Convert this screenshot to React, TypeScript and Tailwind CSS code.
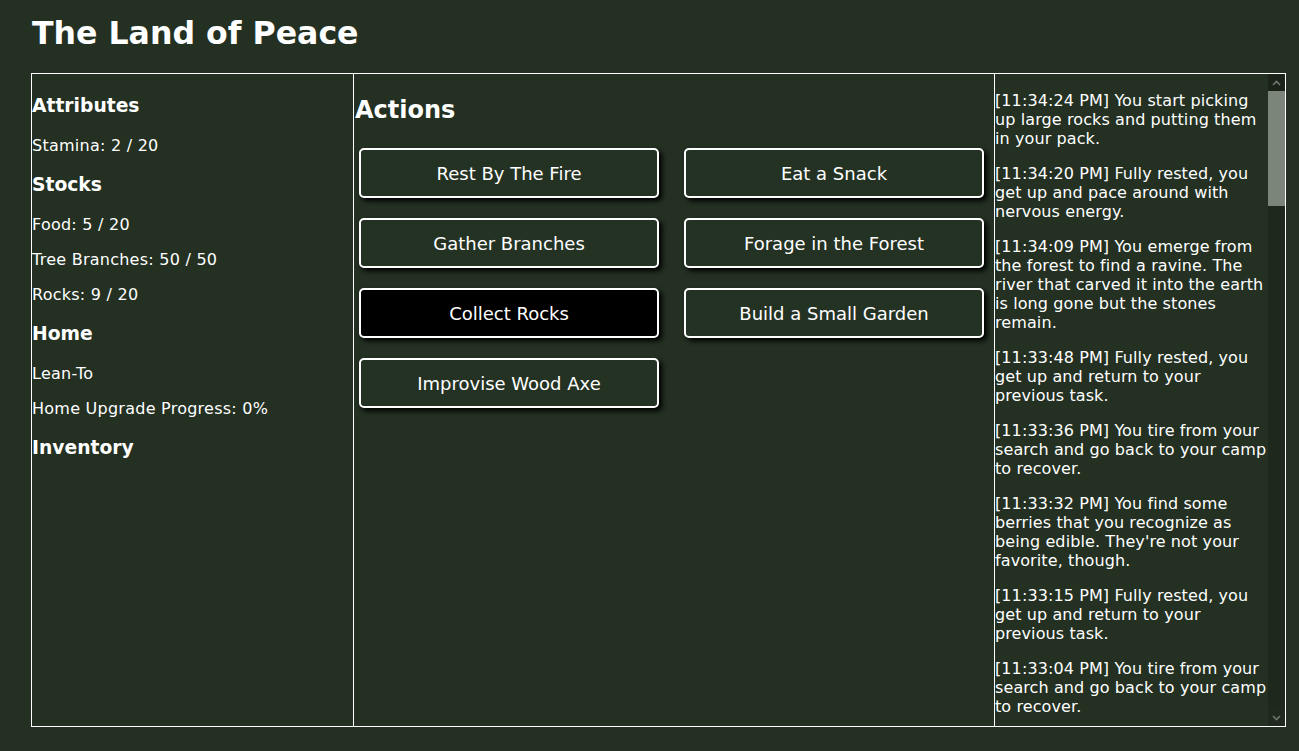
import React from "react";

const stats = [
  { title: "Attributes", rows: ["Stamina: 2 / 20"] },
  { title: "Stocks", rows: ["Food: 5 / 20", "Tree Branches: 50 / 50", "Rocks: 9 / 20"] },
  { title: "Home", rows: ["Lean-To", "Home Upgrade Progress: 0%"] },
  { title: "Inventory", rows: [] as string[] },
];

const actions = [
  "Rest By The Fire",
  "Eat a Snack",
  "Gather Branches",
  "Forage in the Forest",
  "Collect Rocks",
  "Build a Small Garden",
  "Improvise Wood Axe",
];

const msgs = {
  rocks: "You start picking up large rocks and putting them in your pack.",
  pace: "Fully rested, you get up and pace around with nervous energy.",
  ravine:
    "You emerge from the forest to find a ravine. The river that carved it into the earth is long gone but the stones remain.",
  rested: "Fully rested, you get up and return to your previous task.",
  tire: "You tire from your search and go back to your camp to recover.",
  berries:
    "You find some berries that you recognize as being edible. They're not your favorite, though.",
  forage: "You head into the forest to look for something to eat.",
};

const log: [string, string][] = [
  ["11:34:24 PM", msgs.rocks],
  ["11:34:20 PM", msgs.pace],
  ["11:34:09 PM", msgs.ravine],
  ["11:33:48 PM", msgs.rested],
  ["11:33:36 PM", msgs.tire],
  ["11:33:32 PM", msgs.berries],
  ["11:33:15 PM", msgs.rested],
  ["11:33:04 PM", msgs.tire],
  ["11:32:58 PM", msgs.forage],
];

function Chevron({ up }: { up?: boolean }) {
  return (
    <svg width="9" height="6" viewBox="0 0 9 6" className={up ? "" : "rotate-180"}>
      <path d="M1 5 L4.5 1.5 L8 5" fill="none" stroke="#6d776c" strokeWidth="1.6" />
    </svg>
  );
}

export default function App() {
  return (
    <div className="min-h-[751px] bg-[#233022] text-white font-['DejaVu_Sans',Verdana,sans-serif] pl-[31px] pt-[1px]">
      <h1 className="ml-px mt-[13px] mb-[21px] text-[31.6px] leading-[38px] font-bold">The Land of Peace</h1>

      <div className="w-[1255px] h-[654px] border border-white flex">
        {/* stats */}
        <div className="w-[322px] shrink-0 border-r border-white pt-[2px]">
          {stats.map((s) => (
            <div key={s.title}>
              <h3 className="my-[19px] text-[18.72px] leading-[22px] font-bold">{s.title}</h3>
              {s.rows.map((r) => (
                <p key={r} className="my-4 text-[16px] leading-[19px] tracking-[0.25px]">{r}</p>
              ))}
            </div>
          ))}
        </div>

        {/* actions */}
        <div className="w-[641px] shrink-0 border-r border-white">
          <h2 className="ml-px mt-[22px] text-[24px] leading-[28px] font-bold">Actions</h2>
          <div className="mt-[24px] ml-[5px] grid grid-cols-[300px_300px] gap-x-[25px] gap-y-[20px]">
            {actions.map((a) => (
              <button
                key={a}
                className={`h-[50px] border-2 border-white rounded-[5px] shadow-[3px_3px_5px_#000] text-[18px] text-white ${
                  a === "Collect Rocks" ? "bg-black" : "bg-[#243223]"
                }`}
              >
                {a}
              </button>
            ))}
          </div>
        </div>

        {/* log */}
        <div className="flex-1 flex min-w-0">
          <div className="flex-1 min-w-0 overflow-hidden pt-px">
            {log.map(([t, m], i) => (
              <p key={i} className="my-4 text-[16px] leading-[19px] tracking-[0.1px]">
                [{t}] {m}
              </p>
            ))}
          </div>
          <div className="w-[17px] shrink-0 flex flex-col bg-[#1e281d]">
            <div className="h-[17px] bg-[#1b2319] flex items-center justify-center">
              <Chevron up />
            </div>
            <div className="flex-1">
              <div className="h-[115px] bg-[#7b857a]" />
            </div>
            <div className="h-[17px] bg-[#1f291e] flex items-center justify-center">
              <Chevron />
            </div>
          </div>
        </div>
      </div>
    </div>
  );
}
